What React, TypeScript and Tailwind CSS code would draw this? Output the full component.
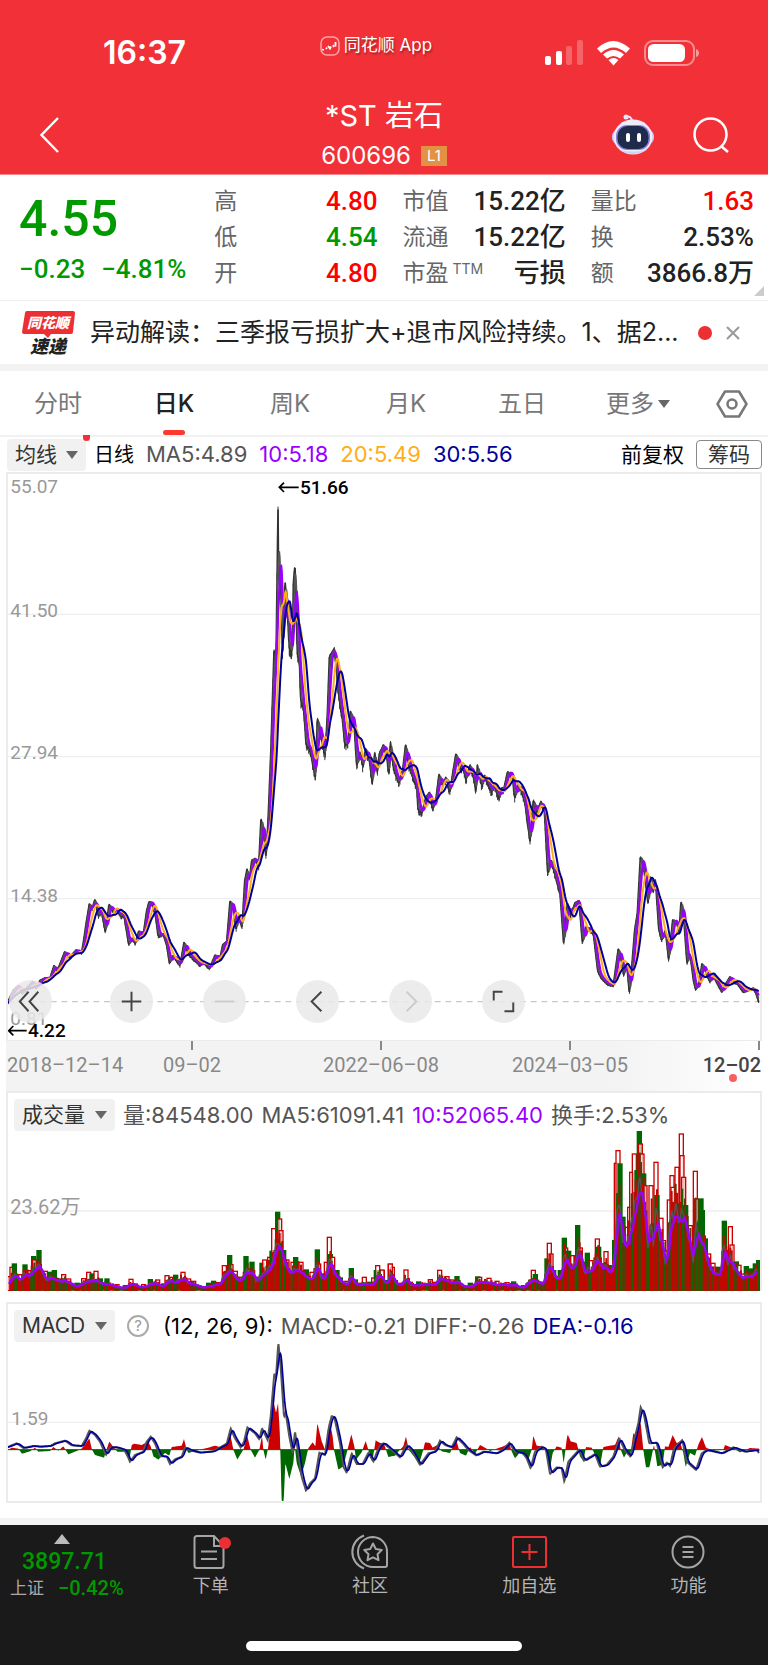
import { useState } from "react";
import type { ReactNode } from "react";

type Point = [number, number];

// Chart units: three per pixel, y grows downwards
const STEP = 1.35;
const HALF = 1140;
const MACD_ZERO = 479;
const VOLUME_BASE = 512;

const shift = (points: Point[], dx: number, dy = 0): Point[] =>
  points.map(([x, y]) => [x + dx, y + dy]);

const parse = (text: string): Point[] =>
  text
    .trim()
    .split(/\s+/)
    .map((pair) => pair.split(",").map(Number) as Point);

const priceEarly = parse(`
20,1522 40,1482 56,1468 66,1490 98,1456 108,1476 120,1453 135,1446 150,1446 162,1410 172,1425 194,1370
210,1385 228,1365 245,1372 252,1330 258,1290 268,1230 276,1245 285,1218 295,1265 304,1250 316,1312 327,1232
338,1250 352,1246 362,1265 372,1265 386,1348 396,1330 406,1345 416,1310 430,1318 440,1250 447,1225 456,1228
466,1262 474,1322 490,1318 500,1350 508,1402 520,1380 540,1410 552,1342 565,1375 580,1390 600,1408 612,1400
628,1418 645,1380 660,1388 668,1350 680,1340 690,1222 700,1240 708,1305 716,1265 726,1298 734,1165 741,1130
748,1160 755,1105 766,1100 776,1120 783,982 790,1020 798,1095 804,990 812,800 822,495 828,520 834,80
836,300 840,240 848,515 855,290 862,380 868,490 877,495 880,300 885,245 892,505 898,520 902,640 910,650
918,765 930,780 946,865 952,690 962,740 975,800 982,680 988,515 1003,490 1010,560 1018,640 1026,680 1034,765
1044,765 1051,670 1062,710 1070,830 1080,790 1088,830 1097,780 1108,810 1117,882 1124,790 1132,850
1138,795 1150,770`);
const EARLY_SCALE = 1.033;

const priceLate = parse(`
18,150 27,225 31,122 40,200 56,248 68,210 77,132 85,190 100,235 110,255 114,328 126,335 138,290 149,278
157,325 168,295 177,222 187,255 198,232 210,275 218,220 228,160 238,200 250,205 258,238 270,195 280,225
288,272 292,195 305,255 314,225 325,250 335,275 342,250 356,292 365,265 372,265 382,218 396,220 404,292
414,255 425,270 435,310 450,425 460,300 470,335 483,305 493,330 503,520 514,480 525,525 540,580 551,732
562,610 572,645 585,608 597,602 607,728 618,680 630,690 640,700 653,812 665,835 684,852 700,856 706,810
715,745 722,770 731,825 740,790 748,880 756,790 764,690 772,640 781,470 790,490 804,610 812,530 820,575
826,535 836,685 845,720 856,690 866,780 878,660 890,665 897,700 903,603 910,640 921,790 930,760 940,840
947,868 957,850 966,790 975,810 990,845 1000,825 1012,850 1026,875 1038,850 1050,830 1060,845 1072,850
1090,875 1105,868 1120,865 1128,880 1136,905`);

// x, height, and r for a day that closed up or g for one that closed down
const volumeEarly = `28,42r 35,70r 42,80g 58,48r 74,77g 84,60r 100,102g 102,92r 116,120g 135,58r 148,55g 162,60g 175,35r
190,48r 205,35r 230,22g 250,36r 265,55r 275,50g 287,58r 300,35g 320,35g 350,18r 375,15g 392,34r 405,20g 430,18r
450,33g 472,32r 490,20g 500,45r 515,40r 526,46g 548,55r 565,35r 580,28r 610,12g 625,22g 640,28g 655,24r 672,75r
688,105g 692,78r 705,58r 720,40r 737,102g 745,65r 755,85g 770,40g 785,82g 793,92r 808,100r 815,118g 820,186r
832,235g 838,215r 842,180r 850,120g 860,92r 878,85r 886,99g 902,85r 918,62g 935,55r 951,122g 955,80r 965,50g
978,85r 987,160r 990,108g 997,100r 1010,60g 1020,38g 1040,28r 1053,66g 1065,32g 1080,22r 1092,40r 1105,25g
1120,38r 1128,60g 1132,75r 1146,60r 1158,30g 1170,79r 1176,70r 1190,20g`;

const volumeLate = `5,62r 30,80r 45,30g 60,22r 77,62r 90,25r 115,26g 150,33r 165,25r 178,61r 200,42r 215,32r 230,42g
250,15g 270,22g 292,41g 298,40r 326,37r 350,28r 380,24r 400,26g 430,15r 459,61r 465,48g 485,25r 500,95g 507,142r
512,110r 520,60g 540,60g 552,157g 556,128r 565,118g 577,105r 592,195g 600,128r 610,85g 621,112g 632,90r 651,155r
655,130g 668,80r 677,117r 690,75g 703,150g 708,382r 713,420r 719,380g 728,220g 737,190r 748,250r 754,355r
762,410r 770,360g 777,478g 780,440r 785,410r 790,350g 794,315r 805,170g 812,315r 820,200g 827,385r 830,285g
842,217r 850,150r 858,118r 867,272r 875,345r 878,310r 890,370r 895,260g 903,470r 905,405r 910,340r 916,255g
930,195r 940,100g 945,358r 948,275r 962,275g 966,240g 975,155g 985,110r 998,82r 1015,70g 1032,208g 1040,120g
1050,192r 1055,137r 1068,86g 1076,76r 1090,50r 1098,72g 1110,65g 1125,80g 1135,90g`;

const diffEarly = parse(`
20,472 50,460 70,474 100,468 120,470 150,468 165,460 195,452 215,466 245,468 258,445 268,422 285,435 300,455
318,495 330,472 350,472 375,480 390,515 405,495 430,485 440,455 452,440 465,460 480,498 500,500 510,522 525,508
545,500 555,472 575,482 600,488 640,484 660,472 680,462 692,415 705,445 722,472 732,455 742,412 765,430 778,448
786,415 803,450 812,380 823,250 828,262 835,158 842,230 852,380 857,368 868,440 878,490 885,425 895,490 905,560
918,602 930,580 945,565 958,488 975,495 985,420 995,378 1003,382 1020,460 1030,530 1040,548 1055,490 1070,522
1088,522 1105,488 1120,515 1135,475 1145,462`);

const diffLate = parse(`
12,460 35,480 60,502 80,465 95,480 120,525 145,490 165,485 180,452 195,465 215,472 230,442 250,462 265,480
288,496 310,485 350,490 370,478 388,458 405,485 430,490 440,505 452,535 465,485 485,470 498,480 510,552 530,532
545,535 553,575 565,515 598,478 612,512 645,492 660,530 680,525 700,500 718,445 735,482 752,500 765,440 775,400
782,352 792,375 808,460 830,458 848,532 860,518 870,528 882,475 907,450 920,515 948,540 965,490 980,480
1025,490 1060,472 1095,485 1130,480 1138,490`);

const macdEarly = parse(`
20,-4 35,6 55,3 66,-12 90,-5 105,6 115,-6 150,-4 160,8 175,-3 190,10 205,-14 230,-4 245,3 258,20 268,34 276,0
285,-16 312,-24 322,8 328,24 340,8 352,-6 372,-6 388,-32 395,14 402,18 425,14 444,25 452,10 460,-20 475,-30
495,-10 508,-18 515,8 545,12 552,32 560,0 565,-10 600,0 625,6 645,12 660,8 680,22 692,40 700,0 712,-30 730,0
742,40 752,0 765,-24 778,0 786,42 790,0 797,-30 805,10 812,70 822,138 828,110 834,140 839,60 841,0 845,-155
851,-155 856,-40 868,-88 880,-40 884,12 890,-40 903,-80 915,-40 925,5 938,22 946,10 952,80 965,25 975,0 983,50
988,88 998,40 1002,0 1015,-60 1030,-50 1045,10 1054,46 1063,10 1068,-30 1085,-8 1097,26 1108,-10 1118,-28
1127,28`);

const macdLate = parse(`
0,20 12,18 25,-22 45,-18 60,0 70,10 78,40 86,0 100,-18 118,-40 130,0 135,22 150,20 158,6 172,14 185,-5 210,-10
222,15 230,25 240,-10 258,-18 270,8 285,-12 300,14 315,6 330,-4 370,10 388,18 395,-5 405,-26 420,-8 445,-30
455,0 460,42 470,12 485,10 497,0 508,-70 518,-10 530,10 545,6 551,-42 560,30 563,46 572,25 590,20 600,-20
610,-34 618,8 635,6 645,-15 660,-50 670,8 690,12 705,14 716,40 722,0 732,-24 742,-5 750,-25 760,50 770,40
782,80 790,0 798,-53 808,-53 815,-20 822,15 832,-50 848,-45 855,10 865,8 878,44 890,20 900,24 910,-10 917,-52
930,-10 945,-18 955,15 966,38 978,6 1000,-3 1030,0 1035,14 1060,4 1080,-8 1110,5 1138,3`);

// Fills in one value per trading day between the known points
const daily = (points: Point[], step = STEP): Point[] => {
  const out: Point[] = [];
  let i = 0;
  const last = points[points.length - 1][0];
  for (let x = points[0][0]; x <= last; x += step) {
    while (i < points.length - 2 && points[i + 1][0] < x) i++;
    const [x0, y0] = points[i];
    const [x1, y1] = points[i + 1];
    out.push([x, y0 + ((y1 - y0) * (x - x0)) / (x1 - x0)]);
  }
  return out;
};

const average = (points: Point[], days: number): Point[] =>
  points.map(([x], i) => {
    const part = points.slice(Math.max(0, i - days + 1), i + 1);
    return [x, part.reduce((sum, p) => sum + p[1], 0) / part.length];
  });

const toPath = (points: Point[]) =>
  "M" + points.map(([x, y]) => `${x.toFixed(1)} ${y.toFixed(1)}`).join("L");

// Repeatable wobble in 0..1
const wobble = (n: number) => {
  const v = Math.sin(n * 12.9898) * 43758.5453;
  return v - Math.floor(v);
};

const price = daily([
  ...priceEarly.map(([x, y]): Point => [x, y * EARLY_SCALE]),
  ...shift(priceLate, HALF, 660),
]);
const wicks = price
  .map(([x, y], i) => {
    const size = 5 + (1650 - y) * 0.026 * wobble(i);
    return `M${x.toFixed(1)} ${(y - size * 0.2).toFixed(1)}v${size.toFixed(1)}`;
  })
  .join("");

const parseVolume = (text: string, dx: number) =>
  text.split(/\s+/).map((item) => {
    const [x, h] = item.slice(0, -1).split(",").map(Number);
    return { x: x + dx, h, up: item.endsWith("r") };
  });

const volume = [...parseVolume(volumeEarly, 0), ...parseVolume(volumeLate, HALF)];
const volumeBody = daily(
  volume.map((v): Point => [v.x, v.h]),
  4
).map(([x, h], i): Point => [x, h * (0.6 + 0.35 * wobble(i))]);
const volumeLine = (days: number, scale: number) =>
  toPath(
    average(volumeBody, days).map(([x, h]): Point => [x, VOLUME_BASE - h * scale])
  );

const diff = daily([...diffEarly, ...shift(diffLate, HALF)]);
const macd = daily([...macdEarly, ...shift(macdLate, HALF)]);
const macdArea = (up: boolean) =>
  `M20 ${MACD_ZERO}L` +
  macd
    .map(([x, v]) => {
      const h = up ? Math.max(v, 0) : Math.min(v, 0);
      return `${x.toFixed(1)} ${(MACD_ZERO - h).toFixed(1)}`;
    })
    .join("L") +
  `L2278 ${MACD_ZERO}Z`;

const NUM = "font-['Roboto','Noto_Sans_CJK_SC',sans-serif]";

const StatusBar = () => (
  <div className="grid h-[88px] grid-cols-3 pt-9">
    <span className="flex h-[34px] items-center pl-[103px] text-[32px] font-semibold">
      16:37
    </span>
    <span className="flex h-5 items-center justify-center gap-1 pr-4 text-[17px] [text-shadow:1px_2px_2px_#00000055]">
      <svg className="size-5" viewBox="0 0 20 20" fill="none">
        <rect x="1" y="1" width="18" height="18" rx="6" stroke="#ffa5a8" strokeWidth="1.5" />
        <path d="M2 13.500l2 .5M6 13l1-1.500M8 10l2 2.500 1-2M13 9l1 2M15.500 6v4.500" stroke="#fff" strokeWidth="1.8" />
      </svg>
      同花顺 App
    </span>
    <span className="flex h-[34px] items-center justify-end pr-[68px]">
      <svg className="h-[26px] w-[156px]" viewBox="0 0 156 26" fill="#fff">
        <rect x="1" y="16" width="6" height="9" rx="2" />
        <rect x="12" y="11" width="6" height="14" rx="2" />
        <rect x="22" y="6" width="6" height="19" rx="2" opacity=".25" />
        <rect x="33" y="0" width="6" height="25" rx="2" opacity=".25" />
        <path d="M53 8.500q16-15 33 0l-4 4.500q-12.500-11-25 0z" />
        <path d="M59 14.500q10.500-9 21 0l-4 4q-6.500-5-13 0z" />
        <path d="M64.500 20q5-4 10 0l-5 5.500z" />
        <rect x="101" y="1" width="49" height="24" rx="8" fill="none" stroke="#fff" strokeOpacity=".45" strokeWidth="2" />
        <rect x="104" y="4" width="37" height="18" rx="5.500" />
        <path d="M152 9q3 1 3 4t-3 4z" opacity=".5" />
      </svg>
    </span>
  </div>
);

const Robot = () => (
  <svg className="h-[42px] w-11" viewBox="0 0 44 42">
    <path d="M14 3q7-2 7 5" stroke="#e8e4f8" strokeWidth="2" fill="none" />
    <circle cx="15" cy="3" r="2.500" fill="#e8e4f8" />
    <rect x="1" y="16" width="42" height="14" rx="6" fill="#c9c6ee" />
    <ellipse cx="22" cy="23" rx="19.500" ry="17.500" fill="#eeebfa" />
    <path d="M8 36q14 8 28 0-14 3-28 0z" fill="#cdd4f4" />
    <rect x="5" y="11" width="34" height="25" rx="11" fill="#8c7fe0" />
    <rect x="6.500" y="12" width="31" height="23" rx="10" fill="#1e2b4a" />
    <rect x="15" y="19" width="4" height="9" rx="2" fill="#fff" />
    <rect x="26" y="19" width="4" height="9" rx="2" fill="#fff" />
  </svg>
);

const Header = () => (
  <header className="bg-[#f23037] text-white">
    <StatusBar />
    <div className="grid h-[87px] grid-cols-3 border-b border-[#f9888c] pt-2">
      <button aria-label="返回" className="flex items-center pl-10">
        <svg className="h-9 w-5" viewBox="0 0 20 36" fill="none" stroke="#fff" strokeWidth="2.500">
          <path d="M18 1L1.500 18 18 35" />
        </svg>
      </button>
      <div className="flex flex-col items-center">
        <h1 className="text-[29px] leading-10 whitespace-nowrap">*ST 岩石</h1>
        <p className="mt-1 flex items-center gap-2.5 text-2xl leading-8">
          600696
          <span className="bg-[#e39145] px-1.5 text-[15px] leading-5">L1</span>
        </p>
      </div>
      <div className="flex items-center justify-end gap-[38px] pr-[39px]">
        <button aria-label="智能助手">
          <Robot />
        </button>
        <button aria-label="搜索">
          <svg className="h-9 w-9" viewBox="0 0 36 36" fill="none" stroke="#fff" strokeWidth="2.500">
            <circle cx="17.500" cy="17.500" r="16" />
            <path d="M28 29l7 6" />
          </svg>
        </button>
      </div>
    </div>
  </header>
);

const stats: { label: ReactNode; value: string; color: string }[][] = [
  [
    { label: "高", value: "4.80", color: "text-[#ff0000]" },
    { label: "低", value: "4.54", color: "text-[#009900]" },
    { label: "开", value: "4.80", color: "text-[#ff0000]" },
  ],
  [
    { label: "市值", value: "15.22亿", color: "text-[#222]" },
    { label: "流通", value: "15.22亿", color: "text-[#222]" },
    {
      label: (
        <>
          市盈<span className="mb-2 ml-1 text-sm">TTM</span>
        </>
      ),
      value: "亏损",
      color: "text-[#222]",
    },
  ],
  [
    { label: "量比", value: "1.63", color: "text-[#ff0000]" },
    { label: "换", value: "2.53%", color: "text-[#222]" },
    { label: "额", value: "3866.8万", color: "text-[#222]" },
  ],
];

const Quote = () => (
  <section className="relative grid grid-cols-[170fr_163fr_163fr_163fr] gap-x-[25px] pt-2 pr-3.5 pb-[9px] pl-[19px]">
    <div className={`${NUM} text-[#009900]`}>
      <p className="h-[68px] text-[50px] leading-[72px] font-medium">4.55</p>
      <p className="flex h-9 items-center gap-4 text-[26px] font-medium whitespace-nowrap">
        <span>−0.23</span>
        <span>−4.81%</span>
      </p>
    </div>
    {stats.map((column, i) => (
      <dl key={i}>
        {column.map((item, j) => (
          <div key={j} className="flex h-9 items-center justify-between whitespace-nowrap">
            <dt className="flex items-center text-[23px] text-[#666]">{item.label}</dt>
            <dd className={`${NUM} text-[26px] font-medium ${item.color}`}>{item.value}</dd>
          </div>
        ))}
      </dl>
    ))}
    <svg className="absolute right-1 bottom-1 size-2.5" viewBox="0 0 10 10">
      <path d="M10 0v10H0z" fill="#ccc" />
    </svg>
  </section>
);

const NewsLogo = () => (
  <svg className="h-11 w-[53px] shrink-0 overflow-visible" viewBox="0 0 53 44">
    <path d="M5 0h46q2 0 2 2l-2 19q0 2-2 2H29l-3 4-4-4H2q-2 0-2-2L3 2q0-2 2-2z" fill="#eb2f33" />
    <g fontWeight="900" fontStyle="italic" textAnchor="middle">
      <text x="26" y="17" fontSize="14" fill="#fff">
        同花顺
      </text>
      <text x="26" y="42" fontSize="18" fill="#222">
        速递
      </text>
    </g>
  </svg>
);

const News = () => (
  <section className="flex h-16 items-center border-t border-[#eee] pr-7 pl-[22px]">
    <a href="#news" className="flex flex-1 items-center gap-[15px]">
      <NewsLogo />
      <span className="text-[25px] whitespace-nowrap text-[#222]">
        异动解读：三季报亏损扩大+退市风险持续。1、据2...
      </span>
    </a>
    <span className="size-3.5 rounded-full bg-[#eb2f33]" />
    <button aria-label="关闭" className="ml-3.5">
      <svg className="size-3.5" viewBox="0 0 14 14" stroke="#999" strokeWidth="2">
        <path d="M1 1l12 12M13 1L1 13" />
      </svg>
    </button>
  </section>
);

const Caret = ({ className }: { className: string }) => (
  <svg className={className} viewBox="0 0 12 8" fill="#666">
    <path d="M0 0h12L6 8z" />
  </svg>
);

const tabs = ["分时", "日K", "周K", "月K", "五日", "更多"];

const Tabs = () => {
  const [active, setActive] = useState("日K");
  return (
    <nav className="flex h-[66px] border-b-2 border-[#f1f1f1]">
      {tabs.map((tab) => (
        <button
          key={tab}
          onClick={() => setActive(tab)}
          className={
            "relative flex flex-1 items-center justify-center gap-1 pt-0.5 text-2xl " +
            (tab === active ? "font-medium text-[#222]" : "text-[#777]")
          }
        >
          {tab}
          {tab === "更多" && <Caret className="h-2 w-3" />}
          {tab === active && (
            <span className="absolute bottom-0 h-[5px] w-[22px] rounded-sm bg-[#fd3830]" />
          )}
        </button>
      ))}
      <button aria-label="设置" className="flex w-[72px] items-center justify-center pt-0.5">
        <svg className="h-7 w-8" viewBox="0 0 32 28" fill="none" stroke="#777" strokeWidth="2.500">
          <path d="M9 1.500h14L30.500 14 23 26.500H9L1.500 14z" strokeLinejoin="round" />
          <circle cx="16" cy="14" r="4.500" />
        </svg>
      </button>
    </nav>
  );
};

const Picker = ({ label, options, width }: { label: string; options: string[]; width: string }) => (
  <span className={`relative flex h-8 shrink-0 items-center rounded-sm bg-[#f1f1f1] ${width}`}>
    <select
      aria-label={label}
      className="h-8 w-full appearance-none bg-transparent pl-2 text-[21px] leading-8 text-[#333]"
    >
      {options.map((option) => (
        <option key={option}>{option}</option>
      ))}
    </select>
    <Caret className="pointer-events-none absolute right-2 h-2 w-3" />
  </span>
);

const ChartBar = () => (
  <div className="flex h-[35px] items-center gap-3 pr-1.5 pl-[7px] text-[22px] whitespace-nowrap text-[#555]">
    <span className="relative -mr-1">
      <Picker label="指标" options={["均线", "BOLL"]} width="w-[79px]" />
      <span className="absolute -top-1 -right-1 h-1.5 w-[7px] rounded-b-full bg-[#f23037]" />
    </span>
    <span className="text-xl text-black">日线</span>
    <span>MA5:4.89</span>
    <span className="text-[#9900ff]">10:5.18</span>
    <span className="text-[#ffae17]">20:5.49</span>
    <span className="text-[#000099]">30:5.56</span>
    <button className="ml-auto text-[21px] text-black">前复权</button>
    <button className="h-[29px] rounded-sm border border-[#888] px-[11px] text-[21px] leading-[27px] text-[#333]">
      筹码
    </button>
  </div>
);

const gridLabels = [
  { y: 39, text: "55.07" },
  { y: 411, text: "41.50", line: 403 },
  { y: 837, text: "27.94", line: 830 },
  { y: 1265, text: "14.38", line: 1256 },
  { y: 1635, text: "0.81" },
];

const RoundButton = ({ label, off, children }: { label: string; off?: boolean; children: ReactNode }) => (
  <button aria-label={label} disabled={off} className="size-[43px] rounded-full bg-[#e9e9e9]/85">
    <svg viewBox="0 0 44 44" fill="none" stroke={off ? "#ccc" : "#444"} strokeWidth="2">
      {children}
    </svg>
  </button>
);

const PriceChart = () => (
  <div className="relative mx-1.5 border-2 border-b border-[#ebebeb]">
    <svg className={`block h-auto w-full ${NUM}`} viewBox="24 -18 2256 1698" fill="none">
      {gridLabels.map((g) => (
        <g key={g.text}>
          {g.line && <path d={`M24 ${g.line}H2280`} stroke="#eee" strokeWidth="4" />}
          <text x="31" y={g.y} fontSize="57" fill="#999">
            {g.text}
          </text>
        </g>
      ))}
      <path d="M24 1565H2280" stroke="#dcc5a4" strokeWidth="4" strokeDasharray="18 14" />
      <path d={wicks} stroke="#333" strokeWidth="3" />
      <path d={toPath(price)} stroke="#333" strokeWidth="5" strokeLinejoin="bevel" />
      <path d={toPath(average(price, 5))} stroke="#555" strokeWidth="5" />
      <path d={toPath(average(price, 10))} stroke="#9900ff" strokeWidth="7" />
      <path d={toPath(average(price, 20))} stroke="#ffae17" strokeWidth="6" />
      <path d={toPath(average(price, 30))} stroke="#000099" strokeWidth="6" />
      <g fill="#000" fontSize="57" fontWeight="500">
        <text x="900" y="43">51.66</text>
        <text x="84" y="1672">4.22</text>
      </g>
      <path d="M838 22h58M852 8l-14 14 14 14M26 1652h54M40 1638l-14 14 14 14" stroke="#000" strokeWidth="5" />
    </svg>
    <div className="absolute bottom-[11px] left-px flex gap-[50px]">
      <span className="mr-2">
        <RoundButton label="最早">
          <path d="M20 12l-9 10 9 10M30 12l-9 10 9 10" />
        </RoundButton>
      </span>
      <RoundButton label="放大">
        <path d="M12 22h20M22 12v20" />
      </RoundButton>
      <RoundButton label="缩小" off>
        <path d="M12 22h20" />
      </RoundButton>
      <RoundButton label="前移">
        <path d="M26 12l-10 10 10 10" />
      </RoundButton>
      <RoundButton label="后移" off>
        <path d="M18 12l10 10-10 10" />
      </RoundButton>
      <RoundButton label="全屏">
        <path d="M12 21v-9h9M32 23v9h-9" />
      </RoundButton>
    </div>
  </div>
);

const dates = [
  { x: 1, text: "2018–12–14", anchor: "start" as const },
  { x: 186, text: "09–02", anchor: "middle" as const },
  { x: 375, text: "2022–06–08", anchor: "middle" as const },
  { x: 564, text: "2024–03–05", anchor: "middle" as const },
];

const DateAxis = () => (
  <div className="mx-1.5 bg-linear-to-r from-[#f3f3f3] from-80% to-white">
    <svg className={`block h-auto w-full ${NUM}`} viewBox="0 0 756 50">
      <path d="M186 0v9M375 0v9M564 0v9M753 0v9" stroke="#888" strokeWidth="2" />
      <g fontSize="20" fill="#888">
        {dates.map((d) => (
          <text key={d.text} x={d.x} y="31" textAnchor={d.anchor}>
            {d.text}
          </text>
        ))}
        <text x="755" y="31" textAnchor="end" fill="#444" fontWeight="500">
          12–02
        </text>
      </g>
      <circle cx="727" cy="37" r="4" fill="#f75f5f" />
    </svg>
  </div>
);

const VolumeChart = () => (
  <section className="mx-1.5 border-2 border-b-0 border-[#ebebeb]">
    <div className="flex h-[38px] items-center gap-2 pt-1.5 pl-1.5 text-[22px] whitespace-nowrap text-[#555]">
      <Picker label="副图一" options={["成交量", "成交额"]} width="w-[101px]" />
      <span>量:84548.00</span>
      <span>MA5:61091.41</span>
      <span className="text-[#9900ff]">10:52065.40</span>
      <span>换手:2.53%</span>
    </div>
    <svg className={`block h-auto w-full ${NUM}`} viewBox="24 33 2256 480" fill="none">
      <path d="M24 273H2280" stroke="#eee" strokeWidth="4" />
      <text x="31" y="282" fontSize="60" fill="#999">
        23.62万
      </text>
      {volume.map((v, i) => (
        <rect
          key={i}
          x={v.x - 5}
          y={VOLUME_BASE - v.h}
          width="12"
          height={v.h}
          fill={v.up ? "#ffffffaa" : "#006600"}
          stroke={v.up ? "#cc0000" : "#006600"}
          strokeWidth="4"
        />
      ))}
      {volumeBody.map(([x, h], i) => (
        <rect
          key={i}
          x={x}
          y={VOLUME_BASE - h}
          width="6"
          height={h}
          fill={wobble(i + 500) > 0.42 ? "#c00800" : wobble(i) > 0.5 ? "#5a3a08" : "#1c6000"}
        />
      ))}
      <path d={volumeLine(2, 0.85)} stroke="#555" strokeWidth="4" />
      <path d={volumeLine(4, 0.8)} stroke="#9900ff" strokeWidth="7" />
    </svg>
  </section>
);

const MacdChart = () => (
  <section className="mx-1.5 mt-[11px] mb-[15px] border-2 border-[#ebebeb]">
    <div className="flex h-[38px] items-center gap-2 pt-1.5 pl-1.5 text-[22px] whitespace-nowrap text-[#555]">
      <Picker label="副图二" options={["MACD", "KDJ", "RSI"]} width="w-[101px]" />
      <button
        aria-label="指标说明"
        className="mr-1.5 ml-1 size-[22px] rounded-full border-2 border-[#aaa] text-[15px] leading-[18px] text-[#999]"
      >
        ?
      </button>
      <span className="text-black">(12, 26, 9):</span>
      <span>MACD:-0.21</span>
      <span>DIFF:-0.26</span>
      <span className="text-[#000099]">DEA:-0.16</span>
    </div>
    <svg className={`block h-auto w-full ${NUM}`} viewBox="24 156 2256 477" fill="none">
      <path d="M24 397H2280" stroke="#eee" strokeWidth="4" />
      <text x="34" y="405" fontSize="57" fill="#999">
        1.59
      </text>
      <path d={macdArea(true)} fill="#cc0000" />
      <path d={macdArea(false)} fill="#006600" />
      <path d={`M24 ${MACD_ZERO}H2278`} stroke="#006600" strokeWidth="3" />
      <path d={toPath(diff)} stroke="#555" strokeWidth="6" />
      <path d={toPath(average(diff, 8))} stroke="#000099" strokeWidth="5" />
    </svg>
  </section>
);

const NavItem = ({ label, children }: { label: string; children: ReactNode }) => (
  <a href="#nav" className="flex flex-col items-center gap-1 pt-[9px] text-lg leading-6 text-[#b5b5b5]">
    <svg className="size-9 overflow-visible" viewBox="0 0 36 36" fill="none" stroke="#a5a5a5" strokeWidth="2">
      {children}
    </svg>
    {label}
  </a>
);

const BottomNav = () => (
  <footer className="border-t-[7px] border-[#f3f3f3] bg-[#1a1a1a]">
    <nav className="grid h-[116px] grid-cols-[131fr_159fr_159fr_159fr_159fr]">
      <a href="#index" className={`flex flex-col pt-[9px] pl-2.5 text-[#009900] ${NUM}`}>
        <svg className="ml-11 h-2.5 w-4" viewBox="0 0 16 10" fill="#bbb">
          <path d="M8 0l8 10H0z" />
        </svg>
        <span className="mt-1 ml-3 text-[23px] leading-7 font-medium">3897.71</span>
        <span className="flex items-center gap-3.5 text-xl leading-6 font-medium whitespace-nowrap">
          <span className="text-[17px] font-normal text-[#aaa]">上证</span>−0.42%
        </span>
      </a>
      <NavItem label="下单">
        <path d="M21 2H4Q1.500 2 1.500 4.500v27Q1.500 34 4 34h24q2.500 0 2.500-2.500V12zV12h9M8 17.500h16M8 25h16" />
        <circle cx="32" cy="9" r="6" fill="#eb2f33" stroke="none" />
      </NavItem>
      <NavItem label="社区">
        <path d="M12 1.500A17.500 17.500 0 0 0 12 34.500" />
        <path d="M21 3a15 15 0 1 0 0 30h12q2 0 2-2V18A14.500 14.500 0 0 0 21 3z" />
        <path d="M21 9.500l2.800 5.500 6 .9-4.300 4.300 1 6-5.500-2.800-5.500 2.800 1-6-4.300-4.300 6-.9z" strokeLinejoin="round" />
      </NavItem>
      <NavItem label="加自选">
        <rect x="2" y="3" width="33" height="30" rx="1" stroke="#eb2f33" />
        <path d="M18.500 10v16M10.500 18h16" stroke="#eb2f33" />
      </NavItem>
      <NavItem label="功能">
        <circle cx="18" cy="18" r="15.500" />
        <path d="M12.500 13h11M12.500 18h11M12.500 23h11" />
      </NavItem>
    </nav>
    <div className="pb-3.5">
      <div className="mx-auto h-2.5 w-[276px] rounded-full bg-white" />
    </div>
  </footer>
);

const App = () => {
  return (
    <div className="w-full bg-white font-['Inter','Noto_Sans_CJK_SC',sans-serif]">
      <Header />
      <Quote />
      <News />
      <div className="h-[7px] bg-[#f3f3f3]" />
      <Tabs />
      <ChartBar />
      <PriceChart />
      <DateAxis />
      <VolumeChart />
      <MacdChart />
      <BottomNav />
    </div>
  );
};

export default App;
